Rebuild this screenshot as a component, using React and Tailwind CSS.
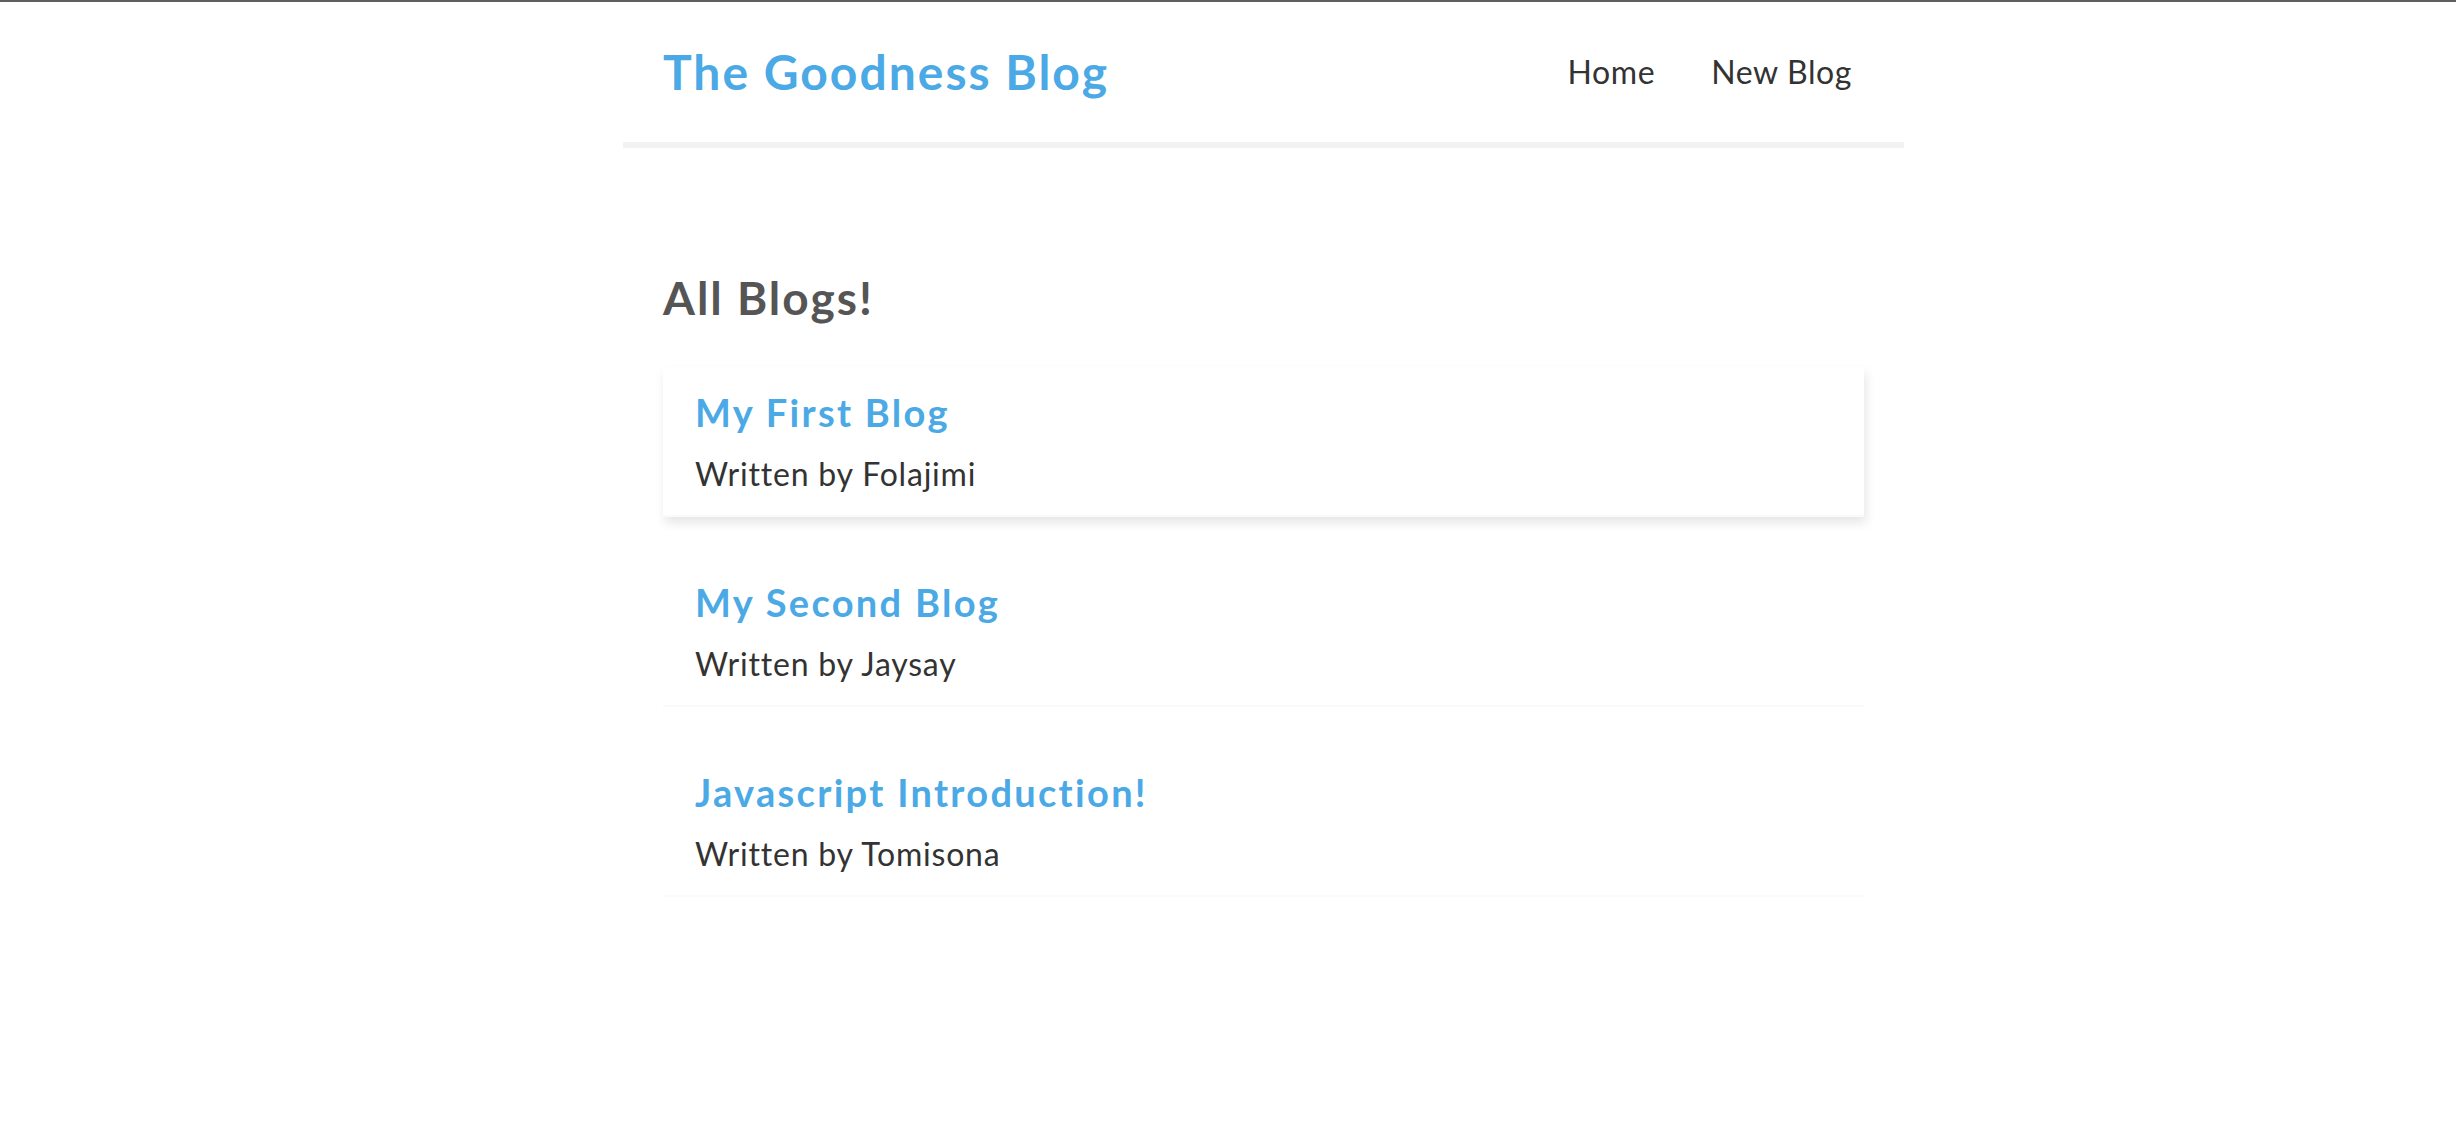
import React from "react";

const blogs = [
  { title: "My First Blog", author: "Folajimi", hover: true },
  { title: "My Second Blog", author: "Jaysay" },
  { title: "Javascript Introduction!", author: "Tomisona" },
];

export default function App() {
  return (
    <div className="min-h-screen bg-white" style={{ fontFamily: "Lato, 'Open Sans', sans-serif" }}>
      <div className="h-[2px] bg-[#5f5f5f]" />
      <div className="ml-[623px] w-[1281px]">
        <nav className="flex items-center h-[146px] px-[40px] border-b-[6px] border-[#f2f2f2]">
          <h1 className="text-[48px] leading-[48px] font-bold tracking-[2px] text-[#4ba9e5]">The Goodness Blog</h1>
          <div className="ml-auto flex items-center">
            <a className="ml-[32px] px-[12px] text-[32px] leading-[32px] tracking-[0.6px] text-[#333333]">Home</a>
            <a className="ml-[32px] px-[12px] text-[32px] leading-[32px] tracking-[0.6px] text-[#333333]">New Blog</a>
          </div>
        </nav>
        <div className="px-[40px] pt-[122px]">
          <h2 className="text-[46px] leading-[55px] font-bold tracking-[2px] text-[#555555]">All Blogs!</h2>
          <div className="mt-[42px] flex flex-col gap-[40px]">
            {blogs.map((b) => (
              <div
                key={b.title}
                className={
                  b.hover
                    ? "pt-[22px] pb-[22px] px-[32px] border-b-2 border-[#fafafa] shadow-[2px_6px_10px_rgba(0,0,0,0.1)]"
                    : "pt-[22px] pb-[22px] px-[32px] border-b-2 border-[#fafafa]"
                }
              >
                <h2 className="text-[38px] leading-[46px] font-bold tracking-[2.3px] text-[#4ba9e5]">{b.title}</h2>
                <p className="mt-[20px] text-[32px] leading-[38px] tracking-[0.8px] text-[#333333]">Written by {b.author}</p>
              </div>
            ))}
          </div>
        </div>
      </div>
    </div>
  );
}
